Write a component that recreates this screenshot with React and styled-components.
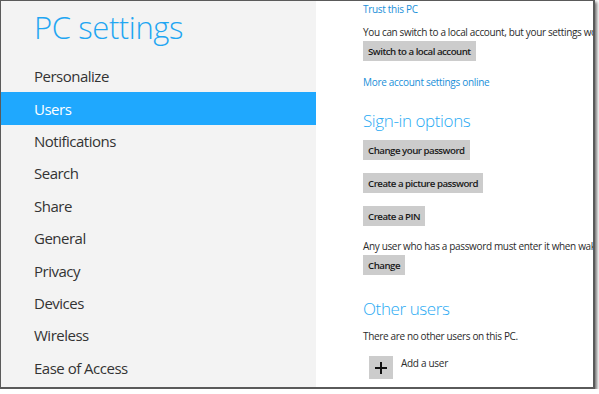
import React from 'react';
import styled, { createGlobalStyle } from 'styled-components';

const GlobalStyle = createGlobalStyle`
  html, body {
    margin: 0;
    padding: 0;
    background: #ffffff;
  }
  body {
    font-family: 'Open Sans', 'Noto Sans', sans-serif;
  }
`;

const Frame = styled.div`
  width: 592px;
  height: 386px;
  border: 1px solid #5a5a5a;
  border-right-width: 2px;
  border-bottom-width: 2px;
  box-shadow: 2px 2px 3px rgba(0, 0, 0, 0.55);
  display: flex;
  overflow: hidden;
  background: #ffffff;
`;

const Sidebar = styled.div`
  width: 315px;
  flex-shrink: 0;
  background: #f3f3f3;
  display: flex;
  flex-direction: column;
`;

const Title = styled.h1`
  margin: 0;
  height: 59px;
  padding-left: 33px;
  font-size: 31px;
  font-weight: 300;
  line-height: 53px;
  color: #1fa6f2;
  letter-spacing: -0.4px;
`;

const NavList = styled.ul`
  list-style: none;
  margin: 0;
  padding: 0;
`;

const NavItem = styled.li`
  height: 32.4px;
  padding-left: 33px;
  display: flex;
  align-items: center;
  font-size: 15px;
  color: ${(p) => (p.active ? '#ffffff' : '#333333')};
  background: ${(p) => (p.active ? '#1fa8fe' : 'transparent')};
  letter-spacing: -0.5px;
`;

const Content = styled.div`
  flex: 1;
  padding-left: 47px;
  display: flex;
  flex-direction: column;
  white-space: nowrap;
  overflow: hidden;
`;

const Link = styled.a`
  display: block;
  margin-top: ${(p) => p.top || 0}px;
  font-size: 10px;
  line-height: 16px;
  color: #1a8fd9;
  text-decoration: none;
  letter-spacing: -0.3px;
`;

const Text = styled.p`
  margin: ${(p) => p.top || 0}px 0 0;
  font-size: 10px;
  line-height: 16px;
  color: #2b2b2b;
  letter-spacing: -0.35px;
`;

const Button = styled.button`
  align-self: flex-start;
  margin-top: ${(p) => p.top || 0}px;
  height: 20px;
  padding: 0 5px;
  border: none;
  background: #cccccc;
  font-family: inherit;
  font-size: 9.7px;
  font-weight: 600;
  color: #1a1a1a;
  letter-spacing: -0.5px;
`;

const Heading = styled.h2`
  margin: ${(p) => p.top || 0}px 0 0;
  font-size: 17px;
  font-weight: 300;
  line-height: 24px;
  color: #29aaf3;
  letter-spacing: -0.4px;
`;

const AddRow = styled.div`
  display: flex;
  align-items: flex-start;
  gap: 8px;
  margin-top: ${(p) => p.top || 0}px;
  padding-left: 6px;
`;

const AddTile = styled.div`
  width: 24px;
  height: 23px;
  background: #cccccc;
  display: flex;
  align-items: center;
  justify-content: center;
`;

const AddLabel = styled.span`
  font-size: 10px;
  line-height: 14px;
  color: #2b2b2b;
  letter-spacing: -0.3px;
`;

const navItems = [
  'Personalize',
  'Users',
  'Notifications',
  'Search',
  'Share',
  'General',
  'Privacy',
  'Devices',
  'Wireless',
  'Ease of Access',
];

const App = () => {
  return (
    <>
      <GlobalStyle />
      <Frame>
        <Sidebar>
          <Title>PC settings</Title>
          <NavList>
            {navItems.map((item) => (
              <NavItem key={item} active={item === 'Users'}>
                {item}
              </NavItem>
            ))}
          </NavList>
        </Sidebar>
        <Content>
          <Link top={0}>Trust this PC</Link>
          <Text top={7}>You can switch to a local account, but your settings won’t sync between the PCs you use.</Text>
          <Button top={1}>Switch to a local account</Button>
          <Link top={13}>More account settings online</Link>
          <Heading top={19}>Sign-in options</Heading>
          <Button top={7}>Change your password</Button>
          <Button top={13}>Create a picture password</Button>
          <Button top={13}>Create a PIN</Button>
          <Text top={12}>Any user who has a password must enter it when waking this PC.</Text>
          <Button top={1}>Change</Button>
          <Heading top={22}>Other users</Heading>
          <Text top={7}>There are no other users on this PC.</Text>
          <AddRow top={12}>
            <AddTile>
              <svg width="14" height="14" viewBox="0 0 14 14">
                <path d="M7 1v12M1 7h12" stroke="#111" strokeWidth="2" />
              </svg>
            </AddTile>
            <AddLabel>Add a user</AddLabel>
          </AddRow>
        </Content>
      </Frame>
    </>
  );
};

export default App;
